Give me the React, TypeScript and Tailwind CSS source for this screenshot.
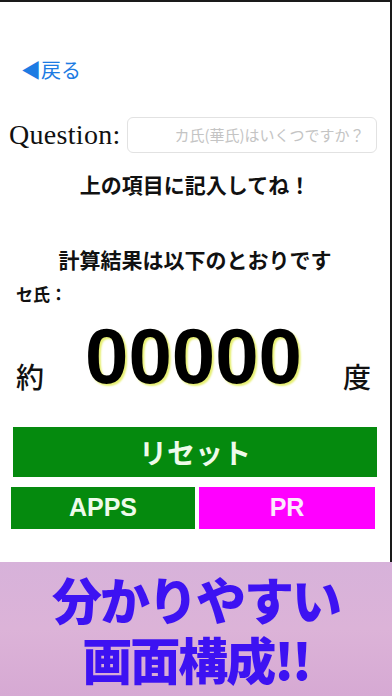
import React from "react";

const jp = "font-['Noto_Sans_CJK_JP','Noto_Sans',sans-serif]";

const App = () => {
  return (
    <div className="w-[392px] h-[696px] overflow-hidden flex flex-col bg-white">
      <div className={`h-[562px] flex flex-col border-t-2 border-r-2 border-[#1a1a1a] bg-white ${jp}`}>
        <div className="pl-[21px] pt-[53px] text-[20px] leading-[30px] text-[#1d7be3]">◀戻る</div>

        <div className="flex items-center pl-[9px] pt-[32px] gap-[6px]">
          <span className="font-['Liberation_Serif',serif] text-[28px] leading-[36px] tracking-[0.3px] text-[#111]">Question:</span>
          <div className="w-[250px] h-[36px] rounded-[6px] border border-[#e2e2e2] flex items-center justify-end pr-[11px]">
            <span className="text-[15px] text-[#c4c4c4]">カ氏(華氏)はいくつですか？</span>
          </div>
        </div>

        <div className="mt-[16px] text-center text-[21px] leading-[30px] font-bold text-[#111]">上の項目に記入してね！</div>
        <div className="mt-[45px] text-center text-[21px] leading-[30px] font-bold text-[#111]">計算結果は以下のとおりです</div>
        <div className="pl-[16px] mt-[8px] text-[17px] leading-[24px] font-bold text-[#111]">セ氏：</div>

        <div className="flex items-end justify-between pl-[16px] pr-[19px] mt-[10px] h-[80px]">
          <span className="text-[28px] leading-[36px] font-medium text-[#111] mb-[2px]">約</span>
          <span className="font-['Liberation_Sans',sans-serif] text-[78px] leading-[80px] font-bold text-black [text-shadow:2px_2px_2px_#e6ef70]">00000</span>
          <span className="text-[28px] leading-[36px] font-medium text-[#111] mb-[2px]">度</span>
        </div>

        <div className="mt-[31px] mx-[13px] h-[50px] bg-[#058a0e] flex items-center justify-center text-[28px] font-bold text-[#eefbea]">リセット</div>

        <div className="mt-[10px] ml-[11px] mr-[15px] h-[42px] flex gap-[4px]">
          <div className="w-[184px] bg-[#058a0e] flex items-center justify-center font-['Liberation_Sans',sans-serif] text-[25px] font-bold text-[#eefbea]">APPS</div>
          <div className="flex-1 bg-[#ff00ff] flex items-center justify-center font-['Liberation_Sans',sans-serif] text-[25px] font-bold text-[#fde9fd]">PR</div>
        </div>
      </div>

      <div className={`flex-1 flex flex-col items-center pt-[6px] bg-gradient-to-b from-[#d7b2da] via-[#dcb3d8] to-[#d6a9d3] ${jp}`}>
        <div className="text-center text-[50px] leading-[60px] font-black text-[#3d12f2] tracking-[-2px]">
          分かりやすい
          <br />
          画面構成!!
        </div>
      </div>
    </div>
  );
};

export default App;
